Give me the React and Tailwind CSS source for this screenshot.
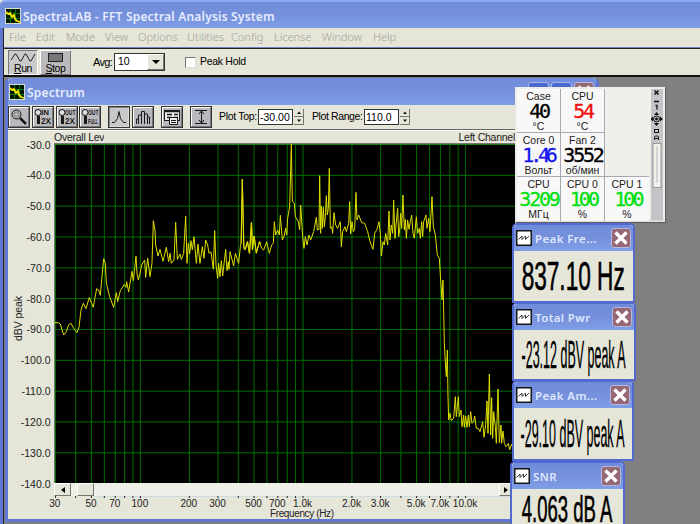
import React from 'react';

const MENU = [
  ['File', 'w-[27px]'],
  ['Edit', 'w-[30px]'],
  ['Mode', 'w-[39px]'],
  ['View', 'w-[33px]'],
  ['Options', 'w-[49px]'],
  ['Utilities', 'w-[44px]'],
  ['Config', 'w-[43px]'],
  ['License', 'w-[48px]'],
  ['Window', 'w-[51px]'],
  ['Help', 'w-[30px]'],
];

// frequency axis, 162.6px per decade
const freqX = (hz) => 139.4 + Math.log10(hz / 100) * 162.6;
const dbY = (db) => 144.5 + (-30 - db) * 3.083;

const FREQS = [
  30, 40, 50, 60, 70, 80, 90, 100, 200, 300, 400, 500, 600, 700, 800, 900,
  1000, 2000, 3000, 4000, 5000, 6000, 7000, 8000, 9000, 10000,
];
const LEVELS = [-30, -40, -50, -60, -70, -80, -90, -100, -110, -120, -130, -140];
const FREQ_LABELS = [
  [30, '30'], [50, '50'], [70, '70'], [100, '100'], [200, '200'], [300, '300'],
  [500, '500'], [700, '700'], [1000, '1.0k'], [2000, '2.0k'], [3000, '3.0k'],
  [5000, '5.0k'], [7000, '7.0k'], [10000, '10.0k'],
];

// trace samples, in thirds of a pixel from each segment's origin
const TRACE_LOW =
  '160,578 172,578 178,582 183,600 188,615 196,605 203,584 210,580 218,595 228,608 234,592 240,540 247,520 255,536 265,502 272,520 277,532 281,508 287,476 293,480 298,496 303,440 308,386 313,400 316,460 326,500 338,532 346,488 350,515 358,482 370,463 375,472 377,455 383,486 393,424 397,452 400,425 405,378 408,430 412,450 417,430 422,405 431,390 434,442 440,384 447,440 453,400 457,272 462,300 464,345 471,378 477,358 486,394 496,352 503,395 507,370 511,400 519,390 524,277 529,388 537,372 541,388 548,370 554,258 558,400 562,340 566,372 570,332 574,360 579,320 586,400 591,342 597,400 604,350 609,385 614,330 620,345 624,370 630,365 637,418 641,302 645,405 650,445 653,400 657,440 661,392 665,438 674,358 678,422 682,395 684,418 687,365 698,408 703,370 713,400 718,350 721,335 724,148 728,350 733,360 740,335 746,370 752,278 755,355 760,318 766,368 776,335 780,342';
const TRACE_HIGH =
  '0,340 4,148 9,358 14,350 19,335 25,370 31,278 34,360 39,318 46,370 55,335 62,355 68,360 77,335 85,370 92,345 97,340 100,275 104,315 110,300 115,315 118,256 124,330 129,320 134,295 137,315 140,265 146,230 151,42 154,215 160,220 163,260 172,275 176,300 179,225 185,320 189,355 193,320 198,345 204,315 209,330 218,305 226,262 229,300 234,298 236,137 239,310 241,228 244,295 247,232 250,290 253,260 256,197 259,255 262,235 265,115 268,295 272,290 275,310 279,248 284,285 290,295 298,275 301,350 305,305 312,290 316,305 323,280 326,215 329,312 333,275 337,305 341,298 345,187 348,270 353,255 362,278 371,280 380,305 387,335 396,358 401,310 408,298 414,275 418,310 421,378 426,335 430,345 434,310 440,345 444,243 447,330 451,285 455,310 458,210 462,325 465,285 470,235 473,320 476,300 479,250 482,295 486,195 490,300 493,268 496,325 500,270 504,298 508,275 512,255 516,310 520,325 526,260 530,310 535,295 538,325 542,275 545,320 548,275 555,255 558,295 563,265 567,305 573,200 577,290 583,315 589,375 595,385 599,450 603,510 606,450 608,540 610,640 614,715 616,740 619,660 621,800 623,870 627,850 631,872 638,865 643,800 646,860 649,830 652,800 655,860 660,840 663,890 668,855 670,892 674,858 678,892 682,855 685,890 689,845 693,880 698,875 701,858 706,895 712,895 717,905 725,875 729,922 734,885 738,813 741,910 745,732 749,915 752,803 755,925 758,845 763,890 766,940 771,777 775,938 780,885 782,940 786,903 790,940 795,950 802,940 806,960 812,942 818,962';

const BAR = 'bg-linear-to-b from-[#6f8cdc] via-[#7690da] to-[#7f9fe8]';
const RAISED = 'border border-t-white border-l-white border-b-[#77776f] border-r-[#77776f]';

const AppIcon = () => (
  <svg className="size-[16px] shrink-0" viewBox="0 0 16 16">
    <rect x=".5" y=".5" width="15" height="15" fill="#001800" stroke="#d8dcd0" />
    <path d="M5.500 1v14M10.500 1v14M1 5.500h14M1 10.500h14" stroke="#087008" />
    <path d="M1 4l2 2 2-1 2 4 2-2 1 4 2 2 3 1" fill="none" stroke="#f4e800" strokeWidth="1.800" />
  </svg>
);

const MeterIcon = () => (
  <svg className="size-[16px] shrink-0" viewBox="0 0 16 16">
    <rect x=".75" y=".75" width="14.500" height="14.500" fill="#fff" stroke="#181818" strokeWidth="1.500" />
    <path d="M2.500 9.500l3.500-3.500v3.500l3.500-3.500v3.500l3.500-3.500" fill="none" stroke="#333" />
  </svg>
);

const CloseButton = () => (
  <svg className="block size-[20px] shrink-0" viewBox="0 0 20 20">
    <rect x=".5" y=".5" width="19" height="19" rx="2.500" fill="#966876" stroke="#b5b9df" />
    <path d="M4.500 4.500l11 11M15.500 4.500l-11 11" stroke="#fff" strokeWidth="3.400" />
  </svg>
);

const ToolButton = ({ gap = '', pressed = false, children }) => (
  <div className={`size-[22px] shrink-0 border border-[#333] ${gap}`}>
    <div
      className={`size-[20px] border ${
        pressed
          ? 'border-t-[#85858a] border-l-[#85858a] border-b-[#ddd] border-r-[#ddd] bg-[#c8c8ca]'
          : 'border-t-white border-l-white border-b-[#77777c] border-r-[#77777c] bg-[#b9b9bd]'
      }`}
    >
      <svg className="block size-[18px] overflow-visible" viewBox="0 0 18 18" fill="none" stroke="#181818">
        {children}
      </svg>
    </div>
  </div>
);

// small lens with two lines of caption beside it
const ZoomCaption = ({ top, bottom }) => (
  <>
    <circle cx="4" cy="4.500" r="3" fill="#ddd" />
    <path d="M4.500 8v8" strokeWidth="3" />
    <g fill="#181818" stroke="none" fontWeight="bold">
      <text x="7" y="6.500" fontSize="6.500" textLength={top === 'IN' ? 8 : 10.5} lengthAdjust="spacingAndGlyphs">{top}</text>
      <text x="7" y="15.500" fontSize={bottom === '2X' ? 9.5 : 6.5} textLength="10" lengthAdjust="spacingAndGlyphs">{bottom}</text>
    </g>
  </>
);

const Spinner = ({ value }) => (
  <div className="flex items-center">
    <div className="h-[16px] w-[35px] border border-[#333] bg-white pl-[1px] text-[10.500px] leading-[14px]">{value}</div>
    <svg className="ml-[1px] h-[16px] w-[10px]" viewBox="0 0 10 16">
      <rect width="10" height="16" fill="#e5e5d8" />
      <path d="M9.500 0v16M0 7.500h10M0 15.500h10" stroke="#77776f" />
      <path d="M3 5h4l-2-2.500zM3 10.500h4l-2 2.500z" fill="#111" />
    </svg>
  </div>
);

const Plot = () => (
  <svg className="relative block h-[340px] w-[509px] overflow-visible" viewBox="7 143 509 340">
    <rect x="54" y="144" width="460" height="339" fill="#000" />
    <g stroke="#007000">
      {FREQS.map((f) => (
        <line key={f} x1={freqX(f)} x2={freqX(f)} y1="144" y2="483" />
      ))}
      {LEVELS.slice(0, -1).map((db) => (
        <line key={db} x1="54" x2="514" y1={dbY(db)} y2={dbY(db)} />
      ))}
    </g>
    <path d="M54 143.500h460M53.500 143v340" stroke="#777" />
    <path d="M54 144.500h460" stroke="#168016" />
    <g fill="none" stroke="#dede00" strokeLinejoin="bevel">
      <polyline points={TRACE_LOW} transform="translate(0 130) scale(.33333)" vectorEffect="non-scaling-stroke" />
      <polyline points={TRACE_HIGH} transform="translate(240 130) scale(.33333)" vectorEffect="non-scaling-stroke" />
    </g>
    <g fill="#222" fontSize="10.500" textAnchor="end">
      {LEVELS.map((db) => (
        <text key={db} x="49.500" y={dbY(db) + 4}>{db}.0</text>
      ))}
    </g>
    <text fill="#222" fontSize="10.500" textLength="45" transform="translate(21 341) rotate(-90)">dBV peak</text>
  </svg>
);

const FreqAxis = () => (
  <svg className="block h-[23px] w-[509px] overflow-visible" viewBox="7 496 509 23">
    <path d="M93 496.500h421" stroke="#cfdde0" />
    {FREQS.map((f) => (
      <line key={f} x1={freqX(f)} x2={freqX(f)} y1="496" y2="498" stroke="#222" />
    ))}
    <g fill="#222" fontSize="10" textAnchor="middle">
      {FREQ_LABELS.map(([f, label]) => (
        <text key={f} x={freqX(f) - 0.5} y="507">{label}</text>
      ))}
    </g>
    <text x="269" y="516.500" fill="#222" fontSize="10" textLength="64">Frequency (Hz)</text>
  </svg>
);

const SpectrumWindow = () => (
  <div className="absolute top-[1px] left-[1px] w-[594px] rounded-t-[5px] border-x-3 border-b-3 border-[#5f77d0] bg-[#e5e5d8]">
    <div className={`flex h-[27px] items-center rounded-t-[4px] pr-[2px] pl-[1px] ${BAR}`}>
      <AppIcon />
      <span className="mt-[2px] ml-[2px] font-['Noto_Sans'] text-[12px] font-semibold tracking-[0.200px] text-[#e6ecff]">Spectrum</span>
      <div className="mt-[1px] ml-auto flex gap-[2px]">
        <div className="h-[20px] w-[21px] rounded-[3px] border border-[#a6b8ed] bg-[#4b68ce]" />
        <div className="h-[20px] w-[21px] rounded-[3px] border border-[#a6b8ed] bg-[#4b68ce] p-[4px]">
          <div className="h-full bg-white" />
        </div>
        <CloseButton />
      </div>
    </div>

    <div className="flex h-[25px] items-center border-b border-[#666] text-[10.500px]">
      <ToolButton>
        <circle cx="6.500" cy="6.500" r="4.500" />
        <circle cx="6.500" cy="6.500" r="2.500" stroke="#777" />
        <path d="M10 10l6 6" strokeWidth="2.500" />
      </ToolButton>
      <ToolButton gap="ml-[2px]"><ZoomCaption top="IN" bottom="2X" /></ToolButton>
      <ToolButton gap="ml-[2px]"><ZoomCaption top="OUT" bottom="2X" /></ToolButton>
      <ToolButton gap="ml-[1px]"><ZoomCaption top="OUT" bottom="FULL" /></ToolButton>
      <ToolButton gap="ml-[7px]" pressed>
        <path d="M2 14.500h2.500l3-4 1.500-7 1.500 7 3 4h2.500" />
      </ToolButton>
      <ToolButton gap="ml-[2px]">
        <path d="M2.500 16v-5h2V7h3V3.500h3V6h3v3h2v7M4.500 16v-6M7.500 16V7M10.500 16V6M13.500 16V9" />
      </ToolButton>
      <ToolButton gap="ml-[7px]">
        <rect x="1.500" y="2.500" width="15" height="10" fill="#eee" />
        <path d="M2 3.500h14M4 6.500h5M4 9.500h5M11 6.500h4M11 9.500h4" strokeWidth="1.500" />
        <path d="M6.500 9.500h8v7h-8z" fill="#eee" />
        <path d="M8 12.500h5M8 14.500h5" />
      </ToolButton>
      <ToolButton gap="ml-[7px]">
        <path d="M3 2.500h12M3 15.500h12M9.500 3v12M7 6l2.500-3L12 6M7 12l2.500 3 2.500-3" />
      </ToolButton>
      <span className="ml-[7px] w-[39px] whitespace-nowrap tracking-[-0.300px]">Plot Top:</span>
      <Spinner value="-30.00" />
      <span className="ml-[8px] w-[52px] whitespace-nowrap tracking-[-0.400px]">Plot Range:</span>
      <Spinner value="110.0" />
    </div>

    <div className="flex h-[13px] w-[509px] justify-between border-t border-white pl-[46px] text-[10.500px] leading-[12px] tracking-[-0.250px] text-[#222]">
      <span className="w-[50px] overflow-hidden whitespace-nowrap">Overall Lev</span>
      <span className="mr-[2px]">Left Channel</span>
    </div>
    <Plot />
    <div className="flex h-[13px] w-[507px] pl-[46px]">
      <div className="flex grow bg-[#f0eee8]">
        <div className={`flex w-[17px] items-center justify-center bg-[#e5e5d8] ${RAISED}`}>
          <div className="border-y-3 border-r-4 border-y-transparent border-r-black" />
        </div>
        <div className={`ml-[6px] w-[17px] bg-[#e5e5d8] ${RAISED}`} />
        <div className={`mr-[3px] ml-auto flex w-[13px] items-center justify-center bg-[#e5e5d8] ${RAISED}`}>
          <div className="border-y-3 border-l-4 border-y-transparent border-l-black" />
        </div>
      </div>
    </div>
    <FreqAxis />
  </div>
);

const Meter = ({ title, place, width, height, children }) => (
  <div className={`absolute flex flex-col rounded-t-[5px] border-2 border-[#5269cf] bg-[#e5e5d8] ${place} ${width} ${height}`}>
    <div className={`flex h-[26px] shrink-0 items-center rounded-t-[4px] pr-[2px] pl-[2px] ${BAR}`}>
      <MeterIcon />
      <span className="mt-[1px] ml-[3px] font-['Noto_Sans'] text-[11.500px] font-semibold tracking-[0.400px] whitespace-nowrap text-[#dfe7ff]">{title}</span>
      <span className="ml-auto"><CloseButton /></span>
    </div>
    <div className="flex grow items-center justify-center whitespace-nowrap">{children}</div>
  </div>
);

const Sensor = ({ name, value, unit, color = 'text-black', spacing = 'mr-[-1px] tracking-[-2.200px]', edge = '' }) => (
  <div className={`flex h-[44px] w-[44px] flex-col items-center border-[#a8a8b0] bg-[#f8f8f8] text-[#222] ${edge}`}>
    <span className="mt-[1px] text-[10.500px] leading-[12px] whitespace-nowrap">{name}</span>
    <span className={`h-[17px] font-['DejaVu_Sans_Mono'] text-[20px] leading-[18px] [-webkit-text-stroke:0.3px_currentColor] ${spacing} ${color}`}>{value}</span>
    <span className="mt-[1px] text-[10.500px] leading-[12px]">{unit}</span>
  </div>
);

const SensorGadget = () => (
  <div className="absolute top-[87px] left-[515px] flex h-[135px] w-[150px] border-2 border-t-[#eeeee8] border-r-[#eeeee8] border-b-[#dcdcd4] border-l-[#eeeee8] bg-[#f0efea] shadow-[1px_1px_1px_#655f65]">
    <div className="grid grow grid-cols-[44px_44px_44px] content-start">
      <Sensor name="Case" value="40" unit="°C" edge="border-r border-b" />
      <Sensor name="CPU" value="54" unit="°C" color="text-[#f01010]" edge="border-r border-b" />
      <div className="row-span-2 border-b border-[#a8a8b0]" />
      <Sensor name="Core 0" value="1.46" unit="Вольт" color="text-[#1414ee]" spacing="mr-[1px] tracking-[-4.200px]" edge="border-r border-b" />
      <Sensor name="Fan 2" value="3552" unit="об/мин" edge="border-r border-b" />
      <Sensor name="CPU" value="3209" unit="МГц" color="text-[#00e010]" edge="border-r" />
      <Sensor name="CPU 0" value="100" unit="%" color="text-[#00e010]" spacing="mr-[-2px] tracking-[-2.800px]" edge="border-r" />
      <Sensor name="CPU 1" value="100" unit="%" color="text-[#00e010]" spacing="mr-[-2px] tracking-[-2.800px]" />
    </div>
    <svg className="h-[131px] w-[12px] shrink-0" viewBox="0 0 12 131" fill="none" stroke="#111">
      <rect width="12" height="131" fill="#c2c4c8" stroke="none" />
      <path d="M3.500 1.500l4 4M7.500 1.500l-4 4" strokeWidth="1.500" />
      <path d="M3 12.500h5M4.500 16.500h1.500v4" strokeWidth="1.300" />
      <circle cx="5.500" cy="30" r="3" />
      <path d="M5.500 23l-2.500 3h5zM5.500 37l-2.500-3h5zM-1 30l3-2.500v5zM12 30l-3-2.500v5z" fill="#111" stroke="none" />
      <circle cx="5.500" cy="30" r="1" fill="#111" />
      <rect x="3.500" y="40.500" width="4" height="3" />
      <path d="M3.500 51v-3l1-1h2l1 1v3M3 49.500h5" />
      <rect x="2" y="54.500" width="8" height="44" fill="#f2f1ec" stroke="#99999c" />
      <path d="M6 57v37" stroke="#b8b8b8" />
    </svg>
  </div>
);

export default function App() {
  return (
    <div className="relative flex h-[524px] w-[700px] flex-col overflow-hidden bg-[#e5e5d8] font-['Liberation_Sans',sans-serif] text-black">
      <div className={`flex h-[28px] shrink-0 items-center rounded-tl-[5px] border-t-2 border-[#8eaaf0] pt-[2px] pl-[5px] ${BAR}`}>
        <AppIcon />
        <span className="mt-[1px] ml-[2px] font-['Noto_Sans'] text-[12px] font-semibold tracking-[0.200px] text-[#e6ecff]">SpectraLAB - FFT Spectral Analysis System</span>
      </div>

      <div className="flex grow border-l-3 border-[#5f77d0]">
        <div className="flex grow flex-col border-l border-[#222]">
          <div className="flex h-[20px] shrink-0 items-center border-b border-[#7382c4] pl-[5px] font-['Noto_Sans'] text-[11px] font-light text-[#a3a398]">
            {MENU.map(([label, width]) => (
              <span key={label} className={`shrink-0 whitespace-nowrap ${width}`}>{label}</span>
            ))}
          </div>

          <div className="flex h-[29px] shrink-0 items-center border-t border-b-2 border-t-[#222] border-b-[#111] pl-[4px] text-[11px]">
            <div className="flex h-[25px] w-[30px] flex-col items-center border border-t-[#777] border-r-white border-b-white border-l-[#777] bg-[#cacacb]">
              <svg className="h-[12px] w-[26px] shrink-0" viewBox="0 0 26 12" fill="none" stroke="#222">
                <path d="M1 9l4-6h1l4 7h1l4-7h1l4 7h1l4-7" />
              </svg>
              <span className="text-[10.500px] leading-[11px] tracking-[-0.400px]"><u>R</u>un</span>
            </div>
            <div className="ml-[2px] flex h-[25px] w-[31px] flex-col items-center border border-t-white border-r-[#777] border-b-[#777] border-l-white bg-[#bababd]">
              <div className="mt-[2px] mb-[1px] h-[9px] w-[15px] shrink-0 border border-[#222] bg-[#77777a]" />
              <span className="text-[10.500px] leading-[11px] tracking-[-0.400px]"><u>S</u>top</span>
            </div>
            <span className="ml-[22px] w-[21px] tracking-[-0.700px]">Avg:</span>
            <div className="flex h-[18px] w-[51px] items-center border border-[#333] bg-white pl-[3px] text-[10.500px]">
              10
              <div className={`ml-auto flex h-[16px] w-[17px] items-center justify-center bg-[#e5e5d8] ${RAISED}`}>
                <div className="border-x-4 border-t-4 border-x-transparent border-t-black" />
              </div>
            </div>
            <div className="ml-[20px] size-[11px] border border-t-[#777] border-r-[#ddd] border-b-[#ddd] border-l-[#777] bg-white" />
            <span className="ml-[4px] text-[10.500px] tracking-[-0.300px]">Peak Hold</span>
          </div>

          <div className="relative grow overflow-hidden bg-[#808080]">
            <SpectrumWindow />
          </div>
        </div>
      </div>

      <SensorGadget />
      <Meter title="Peak Fre..." place="top-[223px] left-[512px]" width="w-[123px]" height="h-[80px]">
        <span className="-mx-[50px] scale-x-[0.565] text-[40px] leading-none [-webkit-text-stroke:0.6px_currentColor]">837.10 Hz</span>
      </Meter>
      <Meter title="Total Pwr" place="top-[302px] left-[512px]" width="w-[124px]" height="h-[79px]">
        <span className="-mx-[120px] scale-x-[0.320] text-[39px] leading-none [-webkit-text-stroke:0.3px_currentColor]">-23.12 dBV peak A</span>
      </Meter>
      <Meter title="Peak Am..." place="top-[380px] left-[512px]" width="w-[122px]" height="h-[81px]">
        <span className="-mx-[120px] scale-x-[0.320] text-[39px] leading-none [-webkit-text-stroke:0.3px_currentColor]">-29.10 dBV peak A</span>
      </Meter>
      <Meter title="SNR" place="top-[461px] left-[510px]" width="w-[115px]" height="h-[72px]">
        <span className="-mx-[50px] scale-x-[0.515] text-[36px] leading-[34px] [-webkit-text-stroke:0.6px_currentColor]">4.063 dB A</span>
      </Meter>
    </div>
  );
}
